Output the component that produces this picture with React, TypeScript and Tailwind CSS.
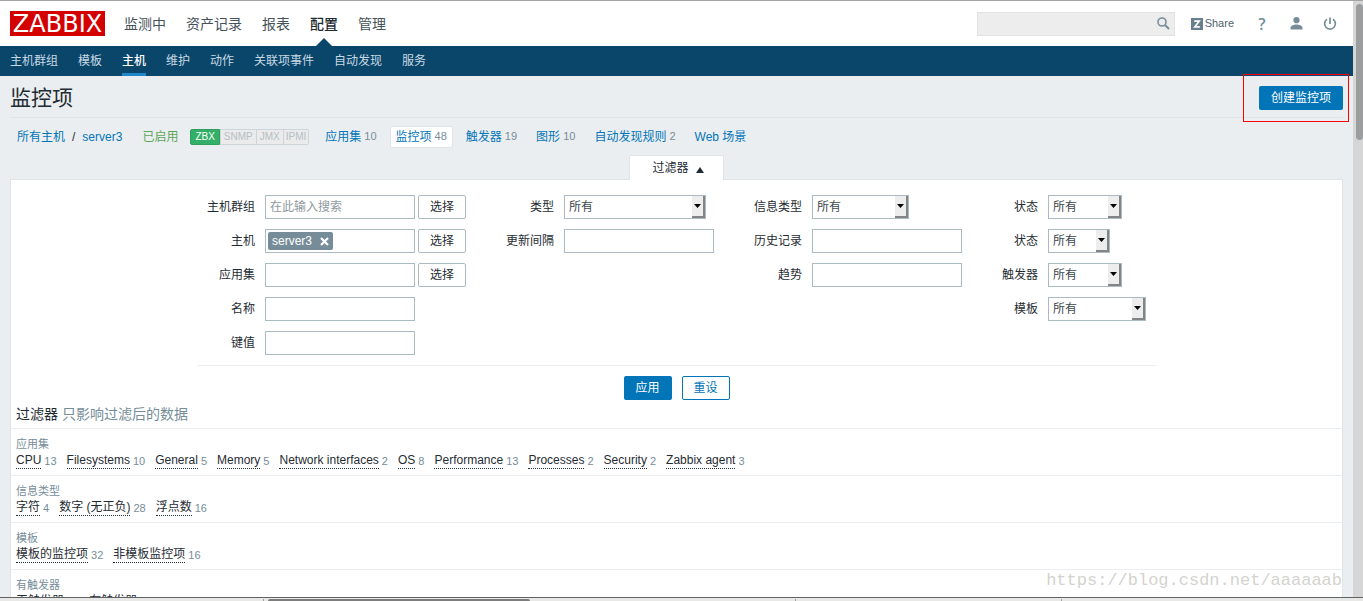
import type { ReactNode } from 'react';
import clsx from 'clsx';

const mainMenu = ['监测中', '资产记录', '报表', '配置', '管理'];
const subMenu = ['主机群组', '模板', '主机', '维护', '动作', '关联项事件', '自动发现', '服务'];

const hostTabs = [
  { label: '应用集', count: 10 },
  { label: '监控项', count: 48, active: true },
  { label: '触发器', count: 19 },
  { label: '图形', count: 10 },
  { label: '自动发现规则', count: 2 },
  { label: 'Web 场景' }
];

const subfilters = [
  {
    title: '应用集',
    items: [
      ['CPU', 13],
      ['Filesystems', 10],
      ['General', 5],
      ['Memory', 5],
      ['Network interfaces', 2],
      ['OS', 8],
      ['Performance', 13],
      ['Processes', 2],
      ['Security', 2],
      ['Zabbix agent', 3]
    ]
  },
  { title: '信息类型', items: [['字符', 4], ['数字 (无正负)', 28], ['浮点数', 16]] },
  { title: '模板', items: [['模板的监控项', 32], ['非模板监控项', 16]] },
  { title: '有触发器', items: [['无触发器', 29], ['有触发器', 19]] }
];

const inputClass = 'h-6 w-[150px] border border-[#acbbc2] bg-white px-1 text-xs outline-none placeholder:text-[#8e989d]';

function Header() {
  return (
    <header className="flex h-[45px] items-center bg-white pl-[10px] pr-4">
      <a
        href="#"
        aria-label="ZABBIX"
        className="flex h-[25px] w-[95px] items-center justify-center bg-[#d40000] font-['DejaVu_Sans'] text-[24px] leading-none text-white"
      >
        ZABBIX
      </a>
      <nav className="ml-[19px] flex h-full gap-5 text-sm">
        {mainMenu.map((item) => (
          <a
            key={item}
            href="#"
            className={clsx('relative flex items-center', item === '配置' ? 'font-medium text-[#1f2c33]' : 'text-[#455259]')}
          >
            {item}
            {item === '配置' && (
              <svg className="absolute bottom-0 left-1/2 -translate-x-1/2" width="16" height="8" viewBox="0 0 16 8">
                <path d="M0 8L8 0l8 8z" fill="#0a466a" />
              </svg>
            )}
          </a>
        ))}
      </nav>
      <div className="ml-auto flex items-center text-[#768d99]">
        <div className="relative">
          <input
            type="text"
            aria-label="搜索"
            className="block h-6 w-[198px] border border-[#e3e3e3] bg-[#ededed] pl-2 pr-6 text-xs outline-none"
          />
          <button type="button" aria-label="搜索" className="absolute right-[5px] top-[5px]">
            <svg width="13" height="13" viewBox="0 0 13 13" fill="none" stroke="currentColor">
              <circle cx="5" cy="5" r="4" strokeWidth="1.6" />
              <path d="M8 8l4 4" strokeWidth="2" />
            </svg>
          </button>
        </div>
        <a href="#" className="ml-4 flex items-center gap-[2px] text-[11px] text-[#4f5f68]">
          <svg width="12" height="12" viewBox="0 0 12 12">
            <path fill="#68808d" d="M0 0h12v12H0z" />
            <path d="M3.200 3.200h5L3.800 8.800h5" fill="none" stroke="#fff" strokeWidth="1.700" />
          </svg>
          Share
        </a>
        <a href="#" aria-label="帮助" className="ml-6 w-2 text-center font-['Open_Sans'] text-base font-semibold leading-none">
          ?
        </a>
        <a href="#" aria-label="用户" className="ml-6">
          <svg width="13" height="13" viewBox="0 0 13 13" fill="currentColor">
            <circle cx="6.5" cy="3.2" r="3.1" />
            <path d="M0.5 12.5v-1.6C0.5 8.8 4 7.6 6.5 7.6s6 1.2 6 3.3v1.6z" />
          </svg>
        </a>
        <a href="#" aria-label="登出" className="ml-5">
          <svg width="14" height="14" viewBox="0 0 14 14" fill="none" stroke="currentColor" strokeWidth="1.7">
            <path d="M7 0.5v6.500M4 2.200a5.400 5.400 0 1 0 6 0" />
          </svg>
        </a>
      </div>
    </header>
  );
}

function SubNav() {
  return (
    <nav className="flex h-[30px] gap-5 bg-[#0a466a] px-[10px] text-xs">
      {subMenu.map((item) => (
        <a
          key={item}
          href="#"
          className={clsx(
            'flex items-center border-y-[3px] border-transparent',
            item === '主机' ? 'border-b-[#1f86c9] font-medium text-white' : 'text-[#c8d9e4]'
          )}
        >
          {item}
        </a>
      ))}
    </nav>
  );
}

function HostBar() {
  return (
    <div className="flex h-[37px] items-center pl-[7px] text-xs text-[#0275b8]">
      <a href="#">所有主机</a>
      <span className="mx-[7px] text-[#1f2c33]">/</span>
      <a href="#">server3</a>
      <span className="ml-5 text-[#59a659]">已启用</span>
      <span className="ml-3 flex h-4 text-[10px] leading-[14px] text-[#b5bfc4]">
        <span className="rounded-l-xs border border-[#2f9f5e] bg-[#34af67] px-1 text-white">ZBX</span>
        <span className="border border-[#ccd5d9] bg-[#ebebeb] px-[3px]">SNMP</span>
        <span className="border border-l-0 border-[#ccd5d9] bg-[#ebebeb] px-[3px]">JMX</span>
        <span className="rounded-r-xs border border-l-0 border-[#ccd5d9] bg-[#ebebeb] px-[2px]">IPMI</span>
      </span>
      <div className="ml-[10px] flex gap-[7px]">
        {hostTabs.map((tab) => (
          <a
            key={tab.label}
            href="#"
            className={clsx(
              'flex h-[22px] items-center gap-[3px] rounded-xs border px-[5px]',
              tab.active ? 'border-[#dfe4e7] bg-white' : 'border-transparent'
            )}
          >
            {tab.label}
            {tab.count && <span className="text-[11px] text-[#768d99]">{tab.count}</span>}
          </a>
        ))}
      </div>
    </div>
  );
}

function Field({ id, label, children }: { id: string; label: string; children: ReactNode }) {
  return (
    <>
      <label htmlFor={id} className="text-right">
        {label}
      </label>
      <div className="flex h-6 gap-[3px]">{children}</div>
    </>
  );
}

function Column({ children }: { children: ReactNode }) {
  return <div className="grid grid-cols-[auto_auto] content-start items-center gap-[10px]">{children}</div>;
}

function PickButton() {
  return (
    <button type="button" className="h-6 w-12 rounded-xs border border-[#acbbc2] bg-white">
      选择
    </button>
  );
}

function Select({ id, className }: { id: string; className: string }) {
  return (
    <div className={clsx('relative', className)}>
      <select id={id} className="h-6 w-full appearance-none border border-[#acbbc2] bg-white px-1 text-[#3c474d] outline-none">
        <option>所有</option>
      </select>
      <span className="pointer-events-none absolute inset-y-px right-px flex w-[13px] items-center justify-center border-b-2 border-r-2 border-[#848484] bg-[#ededed]">
        <svg width="7" height="4" viewBox="0 0 7 4">
          <path d="M0 0h7L3.5 4z" />
        </svg>
      </span>
    </div>
  );
}

function FilterForm() {
  return (
    <form className="mx-auto w-fit">
      <div className="flex gap-10 border-b border-[#ebeef0] px-[10px] pb-[10px]">
        <Column>
          <Field id="groups" label="主机群组">
            <input id="groups" className={inputClass} placeholder="在此输入搜索" />
            <PickButton />
          </Field>
          <Field id="hosts" label="主机">
            <div className="flex h-6 w-[150px] items-center border border-[#acbbc2] px-[2px]">
              <span className="flex h-[18px] items-center gap-2 rounded-xs bg-[#768d99] px-1 text-white">
                server3
                <button type="button" aria-label="移除">
                  <svg width="9" height="9" viewBox="0 0 9 9" stroke="#fff" strokeWidth="2.2">
                    <path d="M1 1l7 7M8 1L1 8" />
                  </svg>
                </button>
              </span>
              <input id="hosts" className="min-w-0 flex-1 outline-none" />
            </div>
            <PickButton />
          </Field>
          <Field id="application" label="应用集">
            <input id="application" className={inputClass} />
            <PickButton />
          </Field>
          <Field id="name" label="名称">
            <input id="name" className={inputClass} />
          </Field>
          <Field id="key" label="键值">
            <input id="key" className={inputClass} />
          </Field>
        </Column>
        <Column>
          <Field id="type" label="类型">
            <Select id="type" className="w-[142px]" />
          </Field>
          <Field id="interval" label="更新间隔">
            <input id="interval" className={inputClass} />
          </Field>
        </Column>
        <Column>
          <Field id="valueType" label="信息类型">
            <Select id="valueType" className="w-[97px]" />
          </Field>
          <Field id="history" label="历史记录">
            <input id="history" className={inputClass} />
          </Field>
          <Field id="trends" label="趋势">
            <input id="trends" className={inputClass} />
          </Field>
        </Column>
        <Column>
          <Field id="state" label="状态">
            <Select id="state" className="w-[74px]" />
          </Field>
          <Field id="status" label="状态">
            <Select id="status" className="w-[62px]" />
          </Field>
          <Field id="triggers" label="触发器">
            <Select id="triggers" className="w-[74px]" />
          </Field>
          <Field id="template" label="模板">
            <Select id="template" className="w-[98px]" />
          </Field>
        </Column>
      </div>
      <div className="flex justify-center gap-[10px] pt-[10px]">
        <button type="button" className="h-6 w-12 rounded-xs bg-[#0275b8] text-white">
          应用
        </button>
        <button type="button" className="h-6 w-12 rounded-xs border border-[#0275b8] bg-white text-[#0275b8]">
          重设
        </button>
      </div>
    </form>
  );
}

function Subfilters() {
  return (
    <div>
      <h4 className="border-b border-[#ebeef0] px-[5px] py-0.5 text-sm leading-6">
        过滤器 <span className="text-[#768d99]">只影响过滤后的数据</span>
      </h4>
      {subfilters.map((group) => (
        <section key={group.title} className="h-[47px] border-b border-[#ebeef0] px-[5px] pt-[7px]">
          <h3 className="text-[11px] leading-4 text-[#768d99]">{group.title}</h3>
          <div className="flex gap-[10px]">
            {group.items.map(([name, count]) => (
              <span key={name} className="flex items-center gap-[3px]">
                <a href="#" className="border-b border-dotted border-[#1f2c33] leading-4">
                  {name}
                </a>
                <span className="text-[11px] leading-4 text-[#768d99]">{count}</span>
              </span>
            ))}
          </div>
        </section>
      ))}
    </div>
  );
}

export default function App() {
  return (
    <div
      lang="zh-CN"
      className="relative flex h-screen flex-col overflow-hidden border-t border-[#a5a5a5] bg-[#ebeef0] font-['Liberation_Sans','Noto_Sans_CJK_SC',sans-serif] text-xs text-[#1f2c33]"
    >
      <div className="flex min-h-0 flex-1">
        <div className="min-w-0 flex-1 overflow-hidden">
          <Header />
          <SubNav />
          <main className="px-[10px]">
            <div className="flex h-[42px] items-center justify-between border-b border-[#dfe4e7] pt-[3px]">
              <h1 className="text-[21px]">监控项</h1>
              <div className="relative">
                <button type="button" className="block h-6 rounded-xs bg-[#0275b8] px-3 text-white">
                  创建监控项
                </button>
                <div className="pointer-events-none absolute -bottom-3 -left-4 -right-[6px] -top-3 border border-[#ff0000]" />
              </div>
            </div>
            <HostBar />
            <div className="flex justify-center">
              <button
                type="button"
                className="z-10 -mb-px flex h-[25px] items-center gap-[7px] rounded-t-xs border border-b-0 border-[#dfe4e7] bg-white pl-[22px] pr-[19px]"
              >
                过滤器
                <svg className="mt-1" width="8" height="6" viewBox="0 0 8 6">
                  <path d="M4 0l4 6H0z" fill="#1f2c33" />
                </svg>
              </button>
            </div>
            <div className="border border-[#dfe4e7] bg-white pt-[15px]">
              <FilterForm />
              <Subfilters />
            </div>
          </main>
        </div>
        <div className="w-[10px] bg-[#d6d6d6] pl-[3px] pt-[3px]">
          <div className="h-[136px] rounded-full bg-[#9b9d9f]" />
        </div>
      </div>
      <div className="flex h-1 border-t border-[#5f6363] bg-[#e8e8e7] pt-px">
        <div className="w-[264px] border-r border-[#a0a0a0]" />
        <div className="ml-1 w-[262px] rounded-t-xs bg-[#7d7d7d]" />
        <div className="ml-[265px] w-[267px] border-x border-[#a0a0a0]" />
      </div>
      <div className="pointer-events-none absolute bottom-2 right-[21px] font-['Liberation_Mono',monospace] text-[17px] leading-6 text-[#d3d3cf]">
        https://blog.csdn.net/aaaaaab
      </div>
    </div>
  );
}
